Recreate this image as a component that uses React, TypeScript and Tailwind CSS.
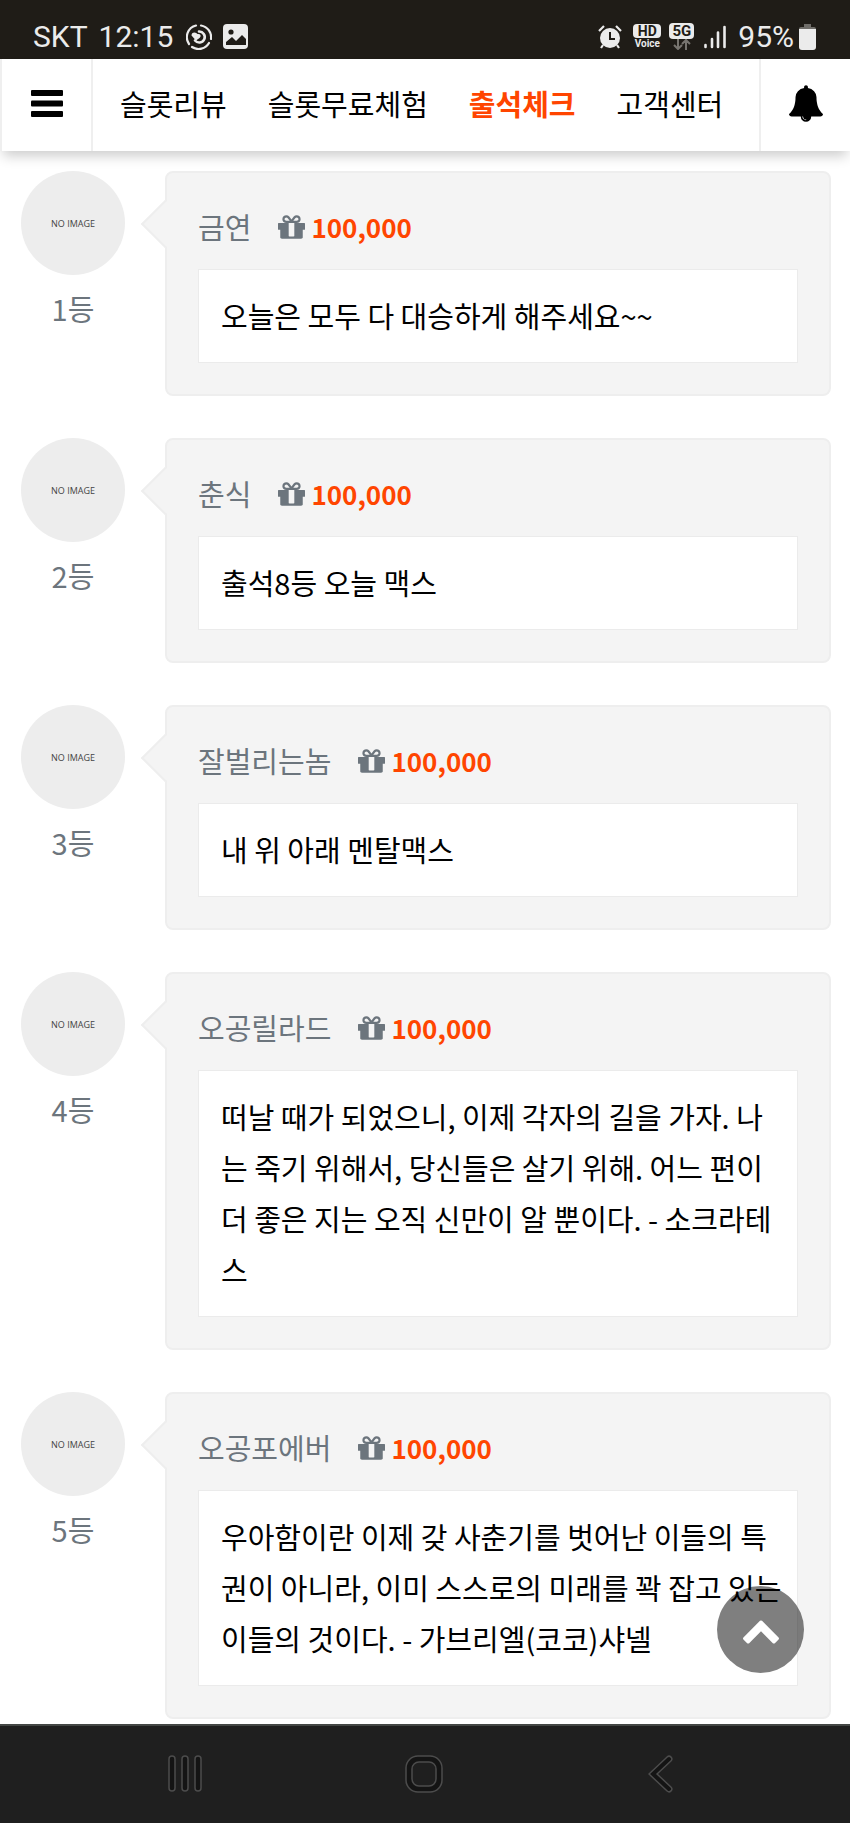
import { clsx } from "clsx";

interface Entry {
  rank: number;
  name: string;
  point: string;
  message: string;
}

const entries: Entry[] = [
  { rank: 1, name: "금연", point: "100,000", message: "오늘은 모두 다 대승하게 해주세요~~" },
  { rank: 2, name: "춘식", point: "100,000", message: "출석8등 오늘 맥스" },
  { rank: 3, name: "잘벌리는놈", point: "100,000", message: "내 위 아래 멘탈맥스" },
  {
    rank: 4,
    name: "오공릴라드",
    point: "100,000",
    message:
      "떠날 때가 되었으니, 이제 각자의 길을 가자. 나는 죽기 위해서, 당신들은 살기 위해. 어느 편이 더 좋은 지는 오직 신만이 알 뿐이다. - 소크라테스",
  },
  {
    rank: 5,
    name: "오공포에버",
    point: "100,000",
    message:
      "우아함이란 이제 갖 사춘기를 벗어난 이들의 특권이 아니라, 이미 스스로의 미래를 꽉 잡고 있는 이들의 것이다. - 가브리엘(코코)샤넬",
  },
];

const menus = ["슬롯리뷰", "슬롯무료체험", "출석체크", "고객센터"];
const activeMenu = "출석체크";

function GiftIcon() {
  return (
    <svg viewBox="128 192 1536 1344" className="w-[27px] h-6 shrink-0" fill="currentColor" aria-hidden="true">
      <path d="M1056 1356v-716h-320v716q0 25 18 38.5t46 13.5h192q28 0 46-13.5t18-38.5zm-456-844h195l-126-161q-26-31-69-31-40 0-68 28t-28 68 28 68 68 28zm688-96q0-40-28-68t-68-28q-43 0-69 31l-125 161h194q40 0 68-28t28-68zm376 256v320q0 14-9 23t-23 9h-96v416q0 40-28 68t-68 28h-1088q-40 0-68-28t-28-68v-416h-96q-14 0-23-9t-9-23v-320q0-14 9-23t23-9h440q-93 0-158.5-65.5t-65.5-158.5 65.5-158.5 158.5-65.5q107 0 168 77l128 165 128-165q61-77 168-77 93 0 158.5 65.5t65.5 158.5-65.5 158.5-158.5 65.5h440q14 0 23 9t9 23z" />
    </svg>
  );
}

function StatusBar() {
  return (
    <div className="flex items-center justify-between h-[59px] pt-[14px] pl-[33px] pr-[34px] bg-[#1f1c17] text-[#ebebeb] font-['Roboto',sans-serif]">
      <div className="flex items-center">
        <span className="flex gap-[11px] text-[30px] leading-9">
          <span>SKT</span>
          <span>12:15</span>
        </span>
        <svg viewBox="0 0 26 26" className="w-[26px] h-[26px] ml-[13px]" fill="none" stroke="currentColor" strokeWidth="2.2" strokeLinecap="round" aria-hidden="true">
          <path d="M10 1.500A12 12 0 0 0 3 20M6 23a12 12 0 0 0 17-4M25 15A12 12 0 0 0 15 1.500" />
          <path d="M13 7.500a5.500 5.500 0 1 1-4 9" strokeWidth="2.600" />
          <path d="M5.500 11.500q0-3 3-3 2 0 3 1.500 2-.5 3 1 .5 2-1 3l-3.500 2.500z" fill="currentColor" stroke="none" />
        </svg>
        <svg viewBox="0 0 25 25" className="w-[25px] h-[25px] ml-[11px]" aria-hidden="true">
          <rect width="25" height="25" rx="4" fill="currentColor" />
          <circle cx="8" cy="8" r="2.600" fill="#1f1c17" />
          <path d="M3 21v-3l6-5 4 4 6-6 4 4v6z" fill="#1f1c17" />
        </svg>
      </div>
      <div className="flex items-center">
        <svg viewBox="0 0 24 24" className="w-6 h-6 mr-[11px]" fill="currentColor" aria-hidden="true">
          <path d="M1 6l5-5M23 6l-5-5M5 20l-2 3M19 20l2 3" stroke="currentColor" strokeWidth="2.200" />
          <circle cx="12" cy="13" r="10" />
          <path d="M12 7v7h5" fill="none" stroke="#1f1c17" strokeWidth="2" />
        </svg>
        <span className="flex flex-col items-center w-7 mr-2 font-bold">
          <span className="w-full rounded-[4px] bg-[#ebebeb] text-center text-[14px] leading-[14px] text-[#1f1c17]">HD</span>
          <span className="text-[10px] leading-[11px]">Voice</span>
        </span>
        <span className="flex flex-col items-center w-[25px] mr-[10px] font-bold">
          <span className="w-full rounded-[4px] bg-[#ebebeb] text-center text-[15px] leading-4 text-[#1f1c17]">5G</span>
          <svg viewBox="0 0 18 11" className="w-[18px] h-[11px]" fill="none" stroke="#77746f" strokeWidth="2" aria-hidden="true">
            <path d="M5 0v10M1 6l4 4 4-4M13 11V1M9 5l4-4 4 4" />
          </svg>
        </span>
        <svg viewBox="0 0 22 24" className="w-[22px] h-6 mr-3" stroke="currentColor" strokeWidth="2.600" strokeLinecap="round" aria-hidden="true">
          <path d="M1.500 20v2M8 14v8M14 7.500v14.500" />
          <path d="M20.500 2v20" />
        </svg>
        <span className="text-[30px] leading-9">95%</span>
        <svg viewBox="0 0 17 26" className="w-[17px] h-[26px] ml-[5px]" aria-hidden="true">
          <path d="M5 0h7v3h3q2 0 2 2v4H0V5q0-2 2-2h3z" fill="#6f6d69" />
          <path d="M0 5h17v18q0 3-3 3H3q-3 0-3-3z" fill="currentColor" />
        </svg>
      </div>
    </div>
  );
}

function Header() {
  return (
    <header className="relative flex h-[92px] bg-white shadow-[0_8px_12px_-3px_rgba(0,0,0,0.2)]">
      <button type="button" aria-label="메뉴" className="flex items-center justify-center w-[93px] pb-[3px] border-x-2 border-[#efefef]">
        <svg viewBox="0 0 32 27" className="w-8 h-[27px]" aria-hidden="true">
          <rect width="32" height="6" rx="1" />
          <rect y="10.500" width="32" height="6" rx="1" />
          <rect y="21" width="32" height="6" rx="1" />
        </svg>
      </button>
      <nav className="flex flex-1 items-center gap-[41px] pl-[27px] pb-[3px] text-[29px] leading-[51px] whitespace-nowrap">
        {menus.map((menu) => (
          <a key={menu} href="#" className={clsx(menu === activeMenu ? "font-bold text-[#ff4500]" : "text-black")}>
            {menu}
          </a>
        ))}
      </nav>
      <button type="button" aria-label="알림" className="flex items-center justify-center w-[91px] pb-[3px] border-l-2 border-[#efefef]">
        <svg viewBox="64 0 1664 1792" className="w-[34px] h-[37px]" aria-hidden="true">
          <path d="M912 1696q0-16-16-16-59 0-101.500-42.500t-42.500-101.500q0-16-16-16t-16 16q0 73 51.500 124.500t124.500 51.500q16 0 16-16zm816-288q0 52-38 90t-90 38h-448q0 106-75 181t-181 75-181-75-75-181h-448q-52 0-90-38t-38-90q50-42 91-88t85-119.500 74.500-158.500 50-206 19.500-260q0-152 117-282.500t307-158.500q-8-19-8-39 0-40 28-68t68-28 68 28 28 68q0 20-8 39 190 28 307 158.500t117 282.500q0 139 19.500 260t50 206 74.500 158.500 85 119.500 91 88z" />
        </svg>
      </button>
    </header>
  );
}

function EntryItem({ entry }: { entry: Entry }) {
  return (
    <li className="flex gap-10">
      <div className="w-[104px] shrink-0 text-center">
        <div className="flex items-center justify-center w-[104px] h-[104px] rounded-full bg-[#ededed] text-[9px] text-[#444444] font-['Open_Sans',sans-serif]">
          NO IMAGE
        </div>
        <p className="mt-2 text-[#6c757d]">{entry.rank}등</p>
      </div>
      <div className="relative flex-1 min-w-0 pt-7 px-[31px] pb-[31px] rounded-lg border-2 border-[#eeeeee] bg-[#f4f4f4]">
        {/* speech bubble tail */}
        <span className="absolute top-[34px] -left-[19px] w-[34px] h-[34px] rotate-45 border-l-2 border-b-2 border-[#eeeeee] bg-[#f4f4f4]" />
        <div className="relative flex items-center mb-[17px] text-[#6c757d]">
          <span className="mr-[27px]">{entry.name}</span>
          <GiftIcon />
          <strong className="ml-[6px] text-[26px] font-bold text-[#ff4500]">{entry.point}</strong>
        </div>
        <p className="pt-5 pb-[21px] pl-[22px] pr-[13px] border border-[#ebebeb] bg-white text-black">{entry.message}</p>
      </div>
    </li>
  );
}

function NavigationBar() {
  return (
    <div className="flex items-center h-[99px] pl-[67px] pr-[70px] pb-[2px] border-t-2 border-[#434644] bg-[#1f1f1f]">
      <button type="button" aria-label="최근 앱" className="flex flex-1 justify-center">
        <svg viewBox="0 0 36 38" className="w-9 h-[38px]" fill="#141414" stroke="#4c4c4c" strokeWidth="1.500" aria-hidden="true">
          <rect x="1" y="1" width="6" height="35" rx="3" />
          <rect x="14" y="1" width="6" height="35" rx="3" />
          <rect x="27" y="1" width="6" height="35" rx="3" />
        </svg>
      </button>
      <button type="button" aria-label="홈" className="flex flex-1 justify-center">
        <svg viewBox="0 0 38 38" className="w-[38px] h-[38px]" stroke="#4c4c4c" strokeWidth="1.500" aria-hidden="true">
          <rect x="1" y="1" width="36" height="36" rx="12" fill="#141414" />
          <rect x="7" y="7" width="24" height="24" rx="7" fill="#1f1f1f" />
        </svg>
      </button>
      <button type="button" aria-label="뒤로" className="flex flex-1 justify-center">
        <svg viewBox="0 0 26 38" className="w-[26px] h-[38px]" fill="none" strokeLinecap="round" aria-hidden="true">
          <path d="M21 4L5 19l16 15" stroke="#4c4c4c" strokeWidth="7" />
          <path d="M21 4L5 19l16 15" stroke="#141414" strokeWidth="4" />
        </svg>
      </button>
    </div>
  );
}

export default function App() {
  return (
    <div className="flex flex-col min-h-screen bg-white font-['Noto_Sans_CJK_KR',sans-serif]">
      <StatusBar />
      <Header />
      <main className="flex-1 pt-5 pl-[21px] pr-[19px]">
        <ul className="flex flex-col gap-[42px] text-[29px] leading-[51px]">
          {entries.map((entry) => (
            <EntryItem key={entry.rank} entry={entry} />
          ))}
        </ul>
      </main>
      <NavigationBar />

      {/* back to top */}
      <button
        type="button"
        aria-label="맨 위로"
        className="fixed right-[46px] bottom-[150px] flex items-center justify-center w-[87px] h-[87px] rounded-full bg-black/50 text-white"
      >
        <svg viewBox="90 480 1612 1035" className="w-9 h-6 mt-1" fill="currentColor" aria-hidden="true">
          <path d="M1683 1331l-166 165q-19 19-45 19t-45-19l-531-531-531 531q-19 19-45 19t-45-19l-166-165q-19-19-19-45.500t19-45.500l742-741q19-19 45-19t45 19l742 741q19 19 19 45.500t-19 45.500z" />
        </svg>
      </button>
    </div>
  );
}
